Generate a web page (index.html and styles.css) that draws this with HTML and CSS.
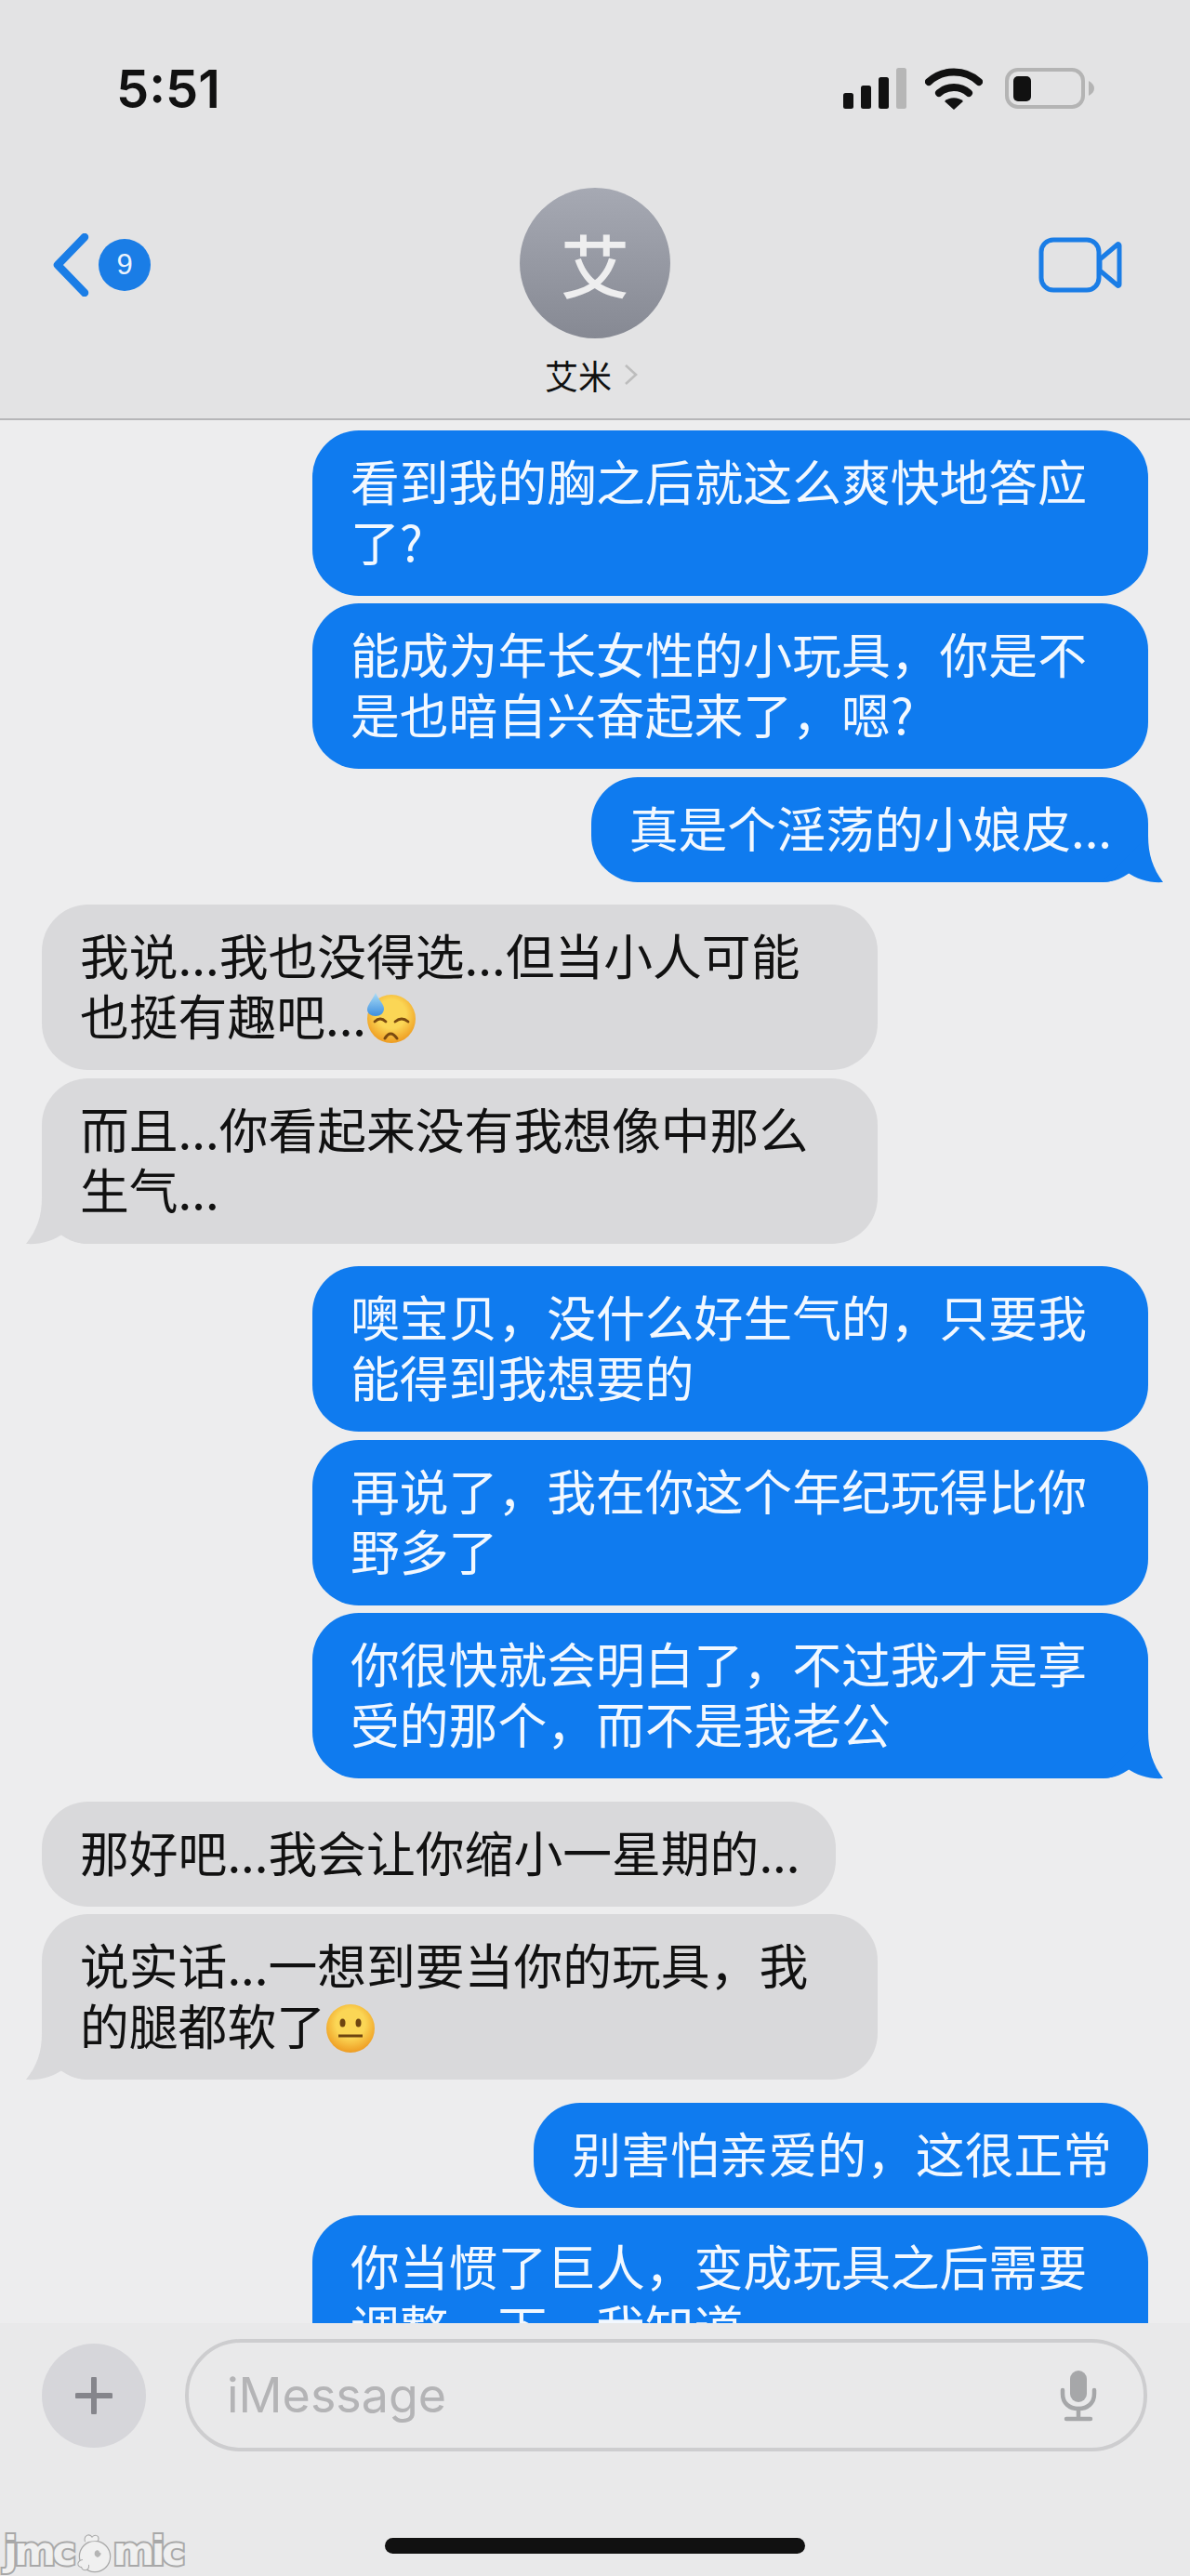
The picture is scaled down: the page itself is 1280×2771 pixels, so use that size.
FILE: index.html
```html
<!DOCTYPE html>
<html lang="zh">
  <head>
    <meta charset="UTF-8" />
    <meta name="viewport" content="width=device-width, initial-scale=1.0" />
    <title>艾米</title>
    <link rel="stylesheet" href="styles.css">
  </head>
  <body>
    <div class="phone">
      <header class="topbar">
        <div class="status">
          <span class="time">5:51</span>
          <div class="status-icons">
            <svg class="signal" width="69" height="44" viewBox="0 0 69 44">
              <rect x="0" y="27" width="11" height="17" rx="2.5" fill="#111"/>
              <rect x="19" y="19" width="11" height="25" rx="2.5" fill="#111"/>
              <rect x="38" y="10" width="11" height="34" rx="2.5" fill="#111"/>
              <rect x="57" y="0" width="11" height="44" rx="2.5" fill="#b6b6b6"/>
            </svg>
            <svg class="wifi" width="62" height="45" viewBox="0 0 62 45">
              <path d="M4 15C19 1 43 1 58 15" fill="none" stroke="#111" stroke-width="8" stroke-linecap="round"/>
              <path d="M15 27C24 19 38 19 47 27" fill="none" stroke="#111" stroke-width="8" stroke-linecap="round"/>
              <path d="M31 45L21 36C26 31 36 31 41 36Z" fill="#111"/>
            </svg>
            <svg class="battery" width="96" height="44" viewBox="0 0 96 44">
              <rect x="2" y="2" width="82" height="40" rx="12" fill="none" stroke="#b4b4b4" stroke-width="4"/>
              <rect x="9" y="9" width="19" height="27" rx="5" fill="#111"/>
              <path d="M90 14C94 16 96 19 96 22C96 25 94 28 90 30Z" fill="#b4b4b4"/>
            </svg>
          </div>
        </div>
        <div class="nav">
          <div class="back">
            <svg width="42" height="68" viewBox="0 0 42 68">
              <path d="M36 4L7 34L36 64" fill="none" stroke="#1a7de6" stroke-width="8.5" stroke-linecap="round" stroke-linejoin="round"/>
            </svg>
            <span class="badge">9</span>
          </div>
          <div class="contact">
            <div class="avatar">艾</div>
            <div class="name">艾米
              <svg width="15" height="24" viewBox="0 0 15 24">
                <path d="M2 2L13 12L2 22" fill="none" stroke="#bdbdbd" stroke-width="2.6"/>
              </svg>
            </div>
          </div>
          <svg class="video" width="90" height="60" viewBox="0 0 90 60">
            <rect x="3" y="3" width="62" height="54" rx="13" fill="none" stroke="#1a7de6" stroke-width="5"/>
            <path d="M66 24L85 8C86 7 87 8 87 9V51C87 52 86 53 85 52L66 36Z" fill="none" stroke="#1a7de6" stroke-width="5" stroke-linejoin="round"/>
          </svg>
        </div>
      </header>

      <main class="chat">
        <div class="group">
          <div class="bubble me">看到我的胸之后就这么爽快地答应了?</div>
          <div class="bubble me">能成为年长女性的小玩具，你是不是也暗自兴奋起来了，嗯?</div>
          <div class="bubble me">真是个淫荡的小娘皮...
            <svg class="tail-me" width="90" height="70" viewBox="0 0 90 70"><path d="M70 13C70 33 75 48 86 63C72 64 58 60 47 52C38 60 30 63 20 63Z" fill="#0f7bef"/></svg>
          </div>
        </div>
        <div class="group">
          <div class="bubble them">我说...我也没得选...但当小人可能也挺有趣吧...<svg class="emoji" width="54" height="56" viewBox="0 0 54 56">
              <defs>
                <radialGradient id="sweatFace" cx="0.5" cy="0.4" r="0.6"><stop offset="0.5" stop-color="#fbd655"/><stop offset="1" stop-color="#ee9c22"/></radialGradient>
                <linearGradient id="sweatDrop" x1="0" y1="0" x2="0" y2="1"><stop offset="0" stop-color="#a9dcf6"/><stop offset="1" stop-color="#3e8fdf"/></linearGradient>
              </defs>
              <circle cx="27" cy="29" r="26" fill="url(#sweatFace)"/>
              <path d="M10 1C7 8 1 14 1 19C1 23 5 26 10 26C15 26 19 23 19 18C19 13 13 8 10 1Z" fill="url(#sweatDrop)"/>
              <path d="M9 32Q15 26 21 32M31 32Q38 26 45 32" fill="none" stroke="#7a4a10" stroke-width="2.8" stroke-linecap="round"/>
              <path d="M20 50Q26 40 33 50" fill="none" stroke="#7a4a10" stroke-width="3" stroke-linecap="round"/>
            </svg></div>
          <div class="bubble them">而且...你看起来没有我想像中那么生气...
            <svg class="tail-them" width="90" height="70" viewBox="0 0 90 70"><path d="M20 13C20 33 15 48 3 63C18 64 32 60 43 52C52 60 60 63 70 63Z" fill="#d9d9db"/></svg>
          </div>
        </div>
        <div class="group">
          <div class="bubble me">噢宝贝，没什么好生气的，只要我能得到我想要的</div>
          <div class="bubble me">再说了，我在你这个年纪玩得比你野多了</div>
          <div class="bubble me">你很快就会明白了，不过我才是享受的那个，而不是我老公
            <svg class="tail-me" width="90" height="70" viewBox="0 0 90 70"><path d="M70 13C70 33 75 48 86 63C72 64 58 60 47 52C38 60 30 63 20 63Z" fill="#0f7bef"/></svg>
          </div>
        </div>
        <div class="group">
          <div class="bubble them">那好吧...我会让你缩小一星期的...</div>
          <div class="bubble them">说实话...一想到要当你的玩具，我的腿都软了<svg class="emoji" width="54" height="54" viewBox="0 0 54 54">
              <defs><radialGradient id="flatFace" cx="0.5" cy="0.4" r="0.6"><stop offset="0.5" stop-color="#fbd655"/><stop offset="1" stop-color="#ee9c22"/></radialGradient></defs>
              <circle cx="27" cy="27" r="26" fill="url(#flatFace)"/>
              <ellipse cx="18.5" cy="21" rx="3" ry="4.5" fill="#6e4510"/>
              <ellipse cx="35.5" cy="21" rx="3" ry="4.5" fill="#6e4510"/>
              <path d="M14 35H40" fill="none" stroke="#6e4510" stroke-width="3"/>
            </svg>
            <svg class="tail-them" width="90" height="70" viewBox="0 0 90 70"><path d="M20 13C20 33 15 48 3 63C18 64 32 60 43 52C52 60 60 63 70 63Z" fill="#d9d9db"/></svg>
          </div>
        </div>
        <div class="group">
          <div class="bubble me">别害怕亲爱的，这很正常</div>
          <div class="bubble me">你当惯了巨人，变成玩具之后需要调整一下，我知道</div>
        </div>
      </main>

      <footer class="composer">
        <div class="input-row">
          <div class="plus">
            <svg width="40" height="40" viewBox="0 0 40 40">
              <path d="M20 2V38M2 20H38" fill="none" stroke="#85858b" stroke-width="6" stroke-linecap="round"/>
            </svg>
          </div>
          <div class="field">
            <span class="placeholder">iMessage</span>
            <svg class="mic" width="40" height="56" viewBox="0 0 40 56">
              <rect x="11" y="1" width="18" height="34" rx="9" fill="#a6a7a9"/>
              <path d="M3 22V26C3 36 10 42 20 42C30 42 37 36 37 26V22" fill="none" stroke="#a6a7a9" stroke-width="4.5" stroke-linecap="round"/>
              <path d="M20 42V52M7 53H33" fill="none" stroke="#a6a7a9" stroke-width="4.5" stroke-linecap="round"/>
            </svg>
          </div>
        </div>
        <div class="home-bar"></div>
        <div class="watermark">jmc<svg width="38" height="44" viewBox="0 0 38 44">
            <circle cx="20" cy="25" r="16" fill="#f0f0f0" stroke="#a8a8a8" stroke-width="2.5"/>
            <path d="M10 9C8 3 14 0 17 5C20 1 25 3 23 8" fill="#f0f0f0" stroke="#a8a8a8" stroke-width="2"/>
            <path d="M20 20C22 17 25 18 25 21C27 20 28 24 23 26C20 25 19 23 20 20Z" fill="#b5b5b5"/>
            <path d="M7 29C1 30 1 36 6 36C7 41 14 40 13 34" fill="#f0f0f0" stroke="#a8a8a8" stroke-width="2"/>
          </svg>mic</div>
      </footer>
    </div>
  </body>
</html>
```

FILE: styles.css
```css
* {
  box-sizing: border-box;
}
body {
  margin: 0;
  background: #ededee;
  font-family: "Noto Sans CJK SC", "Liberation Sans", sans-serif;
}
.phone {
  position: relative;
  width: 1280px;
  height: 2771px;
  display: flex;
  flex-direction: column;
  overflow: hidden;
}

/* top bar */
.topbar {
  height: 452px;
  flex-shrink: 0;
  background: #e3e3e4;
  border-bottom: 2px solid #b6b6b8;
}
.status {
  height: 202px;
  display: flex;
  justify-content: space-between;
  align-items: flex-start;
  padding: 61px 103px 0 125px;
}
.time {
  font-family: Inter, sans-serif;
  font-size: 56px;
  font-weight: 600;
  line-height: 70px;
  color: #111;
}
.status-icons {
  display: flex;
  align-items: flex-start;
  gap: 21px;
  padding-top: 12px;
}
.status-icons .signal {
  margin-right: -2px;
}
.status-icons .wifi {
  margin-right: 3px;
}
.nav {
  position: relative;
  display: flex;
  justify-content: space-between;
  align-items: flex-start;
  padding: 0 73px 0 55px;
}
.back {
  display: flex;
  align-items: center;
  gap: 9px;
  padding-top: 49px;
}
.badge {
  width: 56px;
  height: 56px;
  border-radius: 50%;
  background: #1a7de6;
  color: #eaf3fd;
  font-family: "Liberation Sans", sans-serif;
  font-size: 31px;
  line-height: 56px;
  text-align: center;
}
.contact {
  position: absolute;
  left: 0;
  right: 0;
  top: 0;
  display: flex;
  flex-direction: column;
  align-items: center;
}
.avatar {
  width: 162px;
  height: 162px;
  border-radius: 50%;
  background: linear-gradient(#a6a9b3, #868993);
  color: #eeeeef;
  font-size: 74px;
  font-weight: 500;
  line-height: 162px;
  text-align: center;
}
.name {
  margin-top: 17px;
  display: flex;
  align-items: center;
  gap: 13px;
  padding-right: 8px;
  font-size: 36px;
  line-height: 44px;
  color: #111;
}
.video {
  margin-top: 53px;
}

/* messages */
.chat {
  flex: 1;
  min-height: 0;
  overflow: hidden;
  padding: 10.5px 45px 0;
  display: flex;
  flex-direction: column;
  gap: 24.5px;
}
.group {
  display: flex;
  flex-direction: column;
  gap: 8.5px;
}
.bubble {
  position: relative;
  max-width: 899px;
  padding: 21px 39px 27px 41px;
  border-radius: 50px;
  font-size: 52.8px;
  line-height: 65px;
}
.bubble.me {
  align-self: flex-end;
  background: #0f7bef;
  color: #f2f8ff;
}
.bubble.them {
  align-self: flex-start;
  background: #d9d9db;
  color: #111;
}
.tail-me {
  position: absolute;
  right: -20px;
  bottom: -7px;
}
.tail-them {
  position: absolute;
  left: -20px;
  bottom: -7px;
}
.emoji {
  vertical-align: -9px;
}

/* bottom */
.composer {
  position: relative;
  height: 272px;
  flex-shrink: 0;
  background: #e9e9ea;
  padding: 17px 46px 0 45px;
}
.input-row {
  display: flex;
  align-items: center;
  gap: 42px;
}
.plus {
  width: 112px;
  height: 112px;
  flex-shrink: 0;
  border-radius: 50%;
  background: #d6d6da;
  display: flex;
  align-items: center;
  justify-content: center;
}
.field {
  flex: 1;
  height: 121px;
  border: 4px solid #cdcdcf;
  border-radius: 60px;
  display: flex;
  align-items: center;
  justify-content: space-between;
  padding: 0 50px 0 41px;
}
.placeholder {
  font-family: Inter, sans-serif;
  font-size: 52px;
  color: #b4b4b6;
}
.home-bar {
  position: absolute;
  left: 414px;
  top: 231px;
  width: 452px;
  height: 17px;
  border-radius: 9px;
  background: #111;
}
.watermark {
  position: absolute;
  left: 4px;
  bottom: 2px;
  white-space: nowrap;
  font-family: "DejaVu Sans", sans-serif;
  font-size: 43px;
  font-weight: 700;
  line-height: 50px;
  letter-spacing: -3.5px;
  color: #f0f0f0;
  -webkit-text-stroke: 4px #a8a8a8;
  paint-order: stroke fill;
}
.watermark svg {
  vertical-align: -10px;
  margin: 0 2px 0 3px;
}
```
